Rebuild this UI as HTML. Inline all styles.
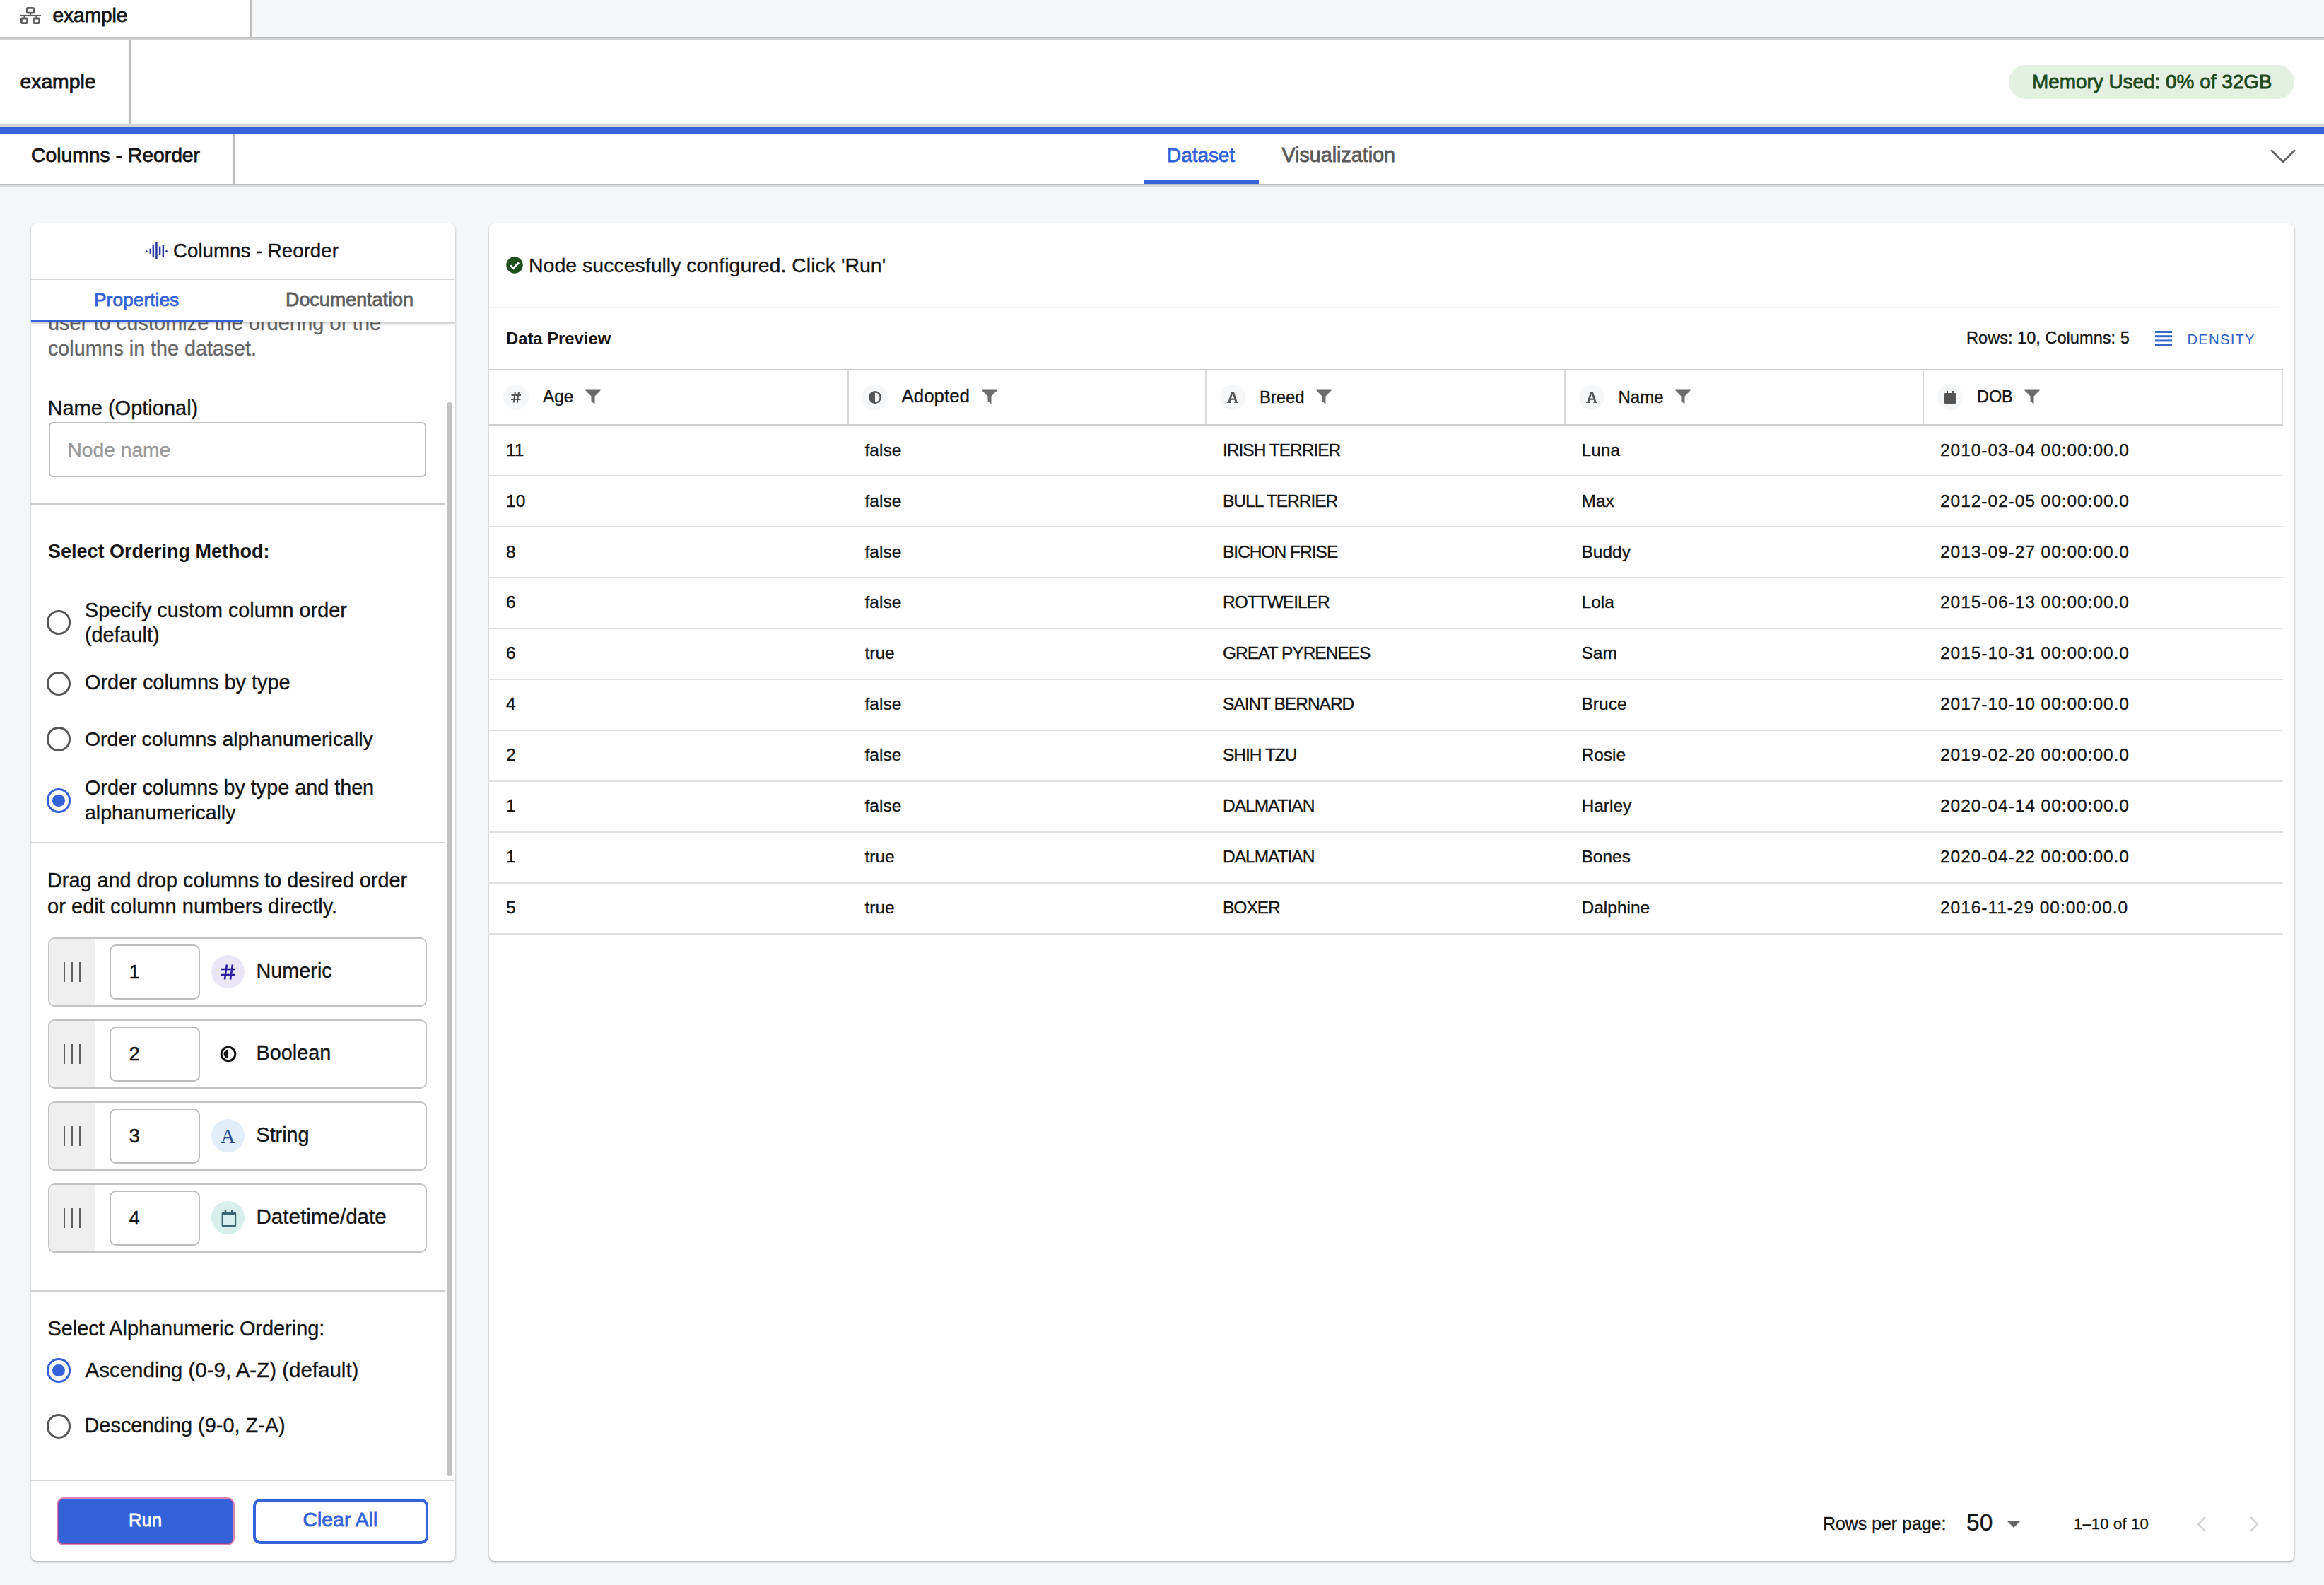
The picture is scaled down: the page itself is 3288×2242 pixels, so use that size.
<!DOCTYPE html>
<html><head><meta charset="utf-8"><title>Columns - Reorder</title>
<style>
html,body{margin:0;padding:0;}
body{width:3288px;height:2242px;position:relative;overflow:hidden;background:#f5f6f8;font-family:"Liberation Sans",sans-serif;color:#1a1a1a;}
.t{position:absolute;white-space:nowrap;line-height:1;}
.r{position:absolute;}
</style></head><body>
<div class="r" style="left:0px;top:0px;width:3288px;height:52px;background:#f5f6f8"></div>
<div class="r" style="left:0px;top:0px;width:354px;height:52px;background:#fff"></div>
<div class="r" style="left:354px;top:0px;width:2px;height:52px;background:#bdbdbd"></div>
<div class="r" style="left:0px;top:52px;width:3288px;height:2px;background:#bdbdbd"></div>
<div class="r" style="left:0px;top:54px;width:3288px;height:2px;background:#d2d2d2"></div>
<svg class="r" style="left:28px;top:10px" width="30" height="24" viewBox="0 0 30 24" fill="none" stroke="#5c5c5c" stroke-width="2.2">
<rect x="10.3" y="1.4" width="9.4" height="6.8" rx="1" stroke-width="2.8"/>
<line x1="15" y1="8" x2="15" y2="12"/>
<line x1="0" y1="12" x2="30" y2="12"/>
<line x1="6.5" y1="12" x2="6.5" y2="15"/>
<line x1="23.5" y1="12" x2="23.5" y2="15"/>
<rect x="2.4" y="16" width="8.2" height="6.6" rx="1" stroke-width="2.8"/>
<rect x="19.4" y="16" width="8.2" height="6.6" rx="1" stroke-width="2.8"/>
</svg>
<div class="t" style="left:74.5px;top:7.6px;font-size:28px;-webkit-text-stroke:0.8px currentColor;color:#141414;">example</div>
<div class="r" style="left:0px;top:56px;width:3288px;height:120px;background:#fff"></div>
<div class="r" style="left:183px;top:56px;width:2px;height:120px;background:#bdbdbd"></div>
<div class="t" style="left:28.5px;top:100.8px;font-size:28.3px;-webkit-text-stroke:0.8px currentColor;color:#141414;">example</div>
<div class="r" style="left:2842px;top:92px;width:404px;height:48px;background:#e3f0e2;border-radius:24px"></div>
<div class="t" style="left:2875px;top:101.7px;font-size:27.9px;-webkit-text-stroke:0.8px currentColor;color:#1d4a1d;">Memory Used: 0% of 32GB</div>
<div class="r" style="left:0px;top:176px;width:3288px;height:4px;background:#d6d6d6"></div>
<div class="r" style="left:0px;top:180px;width:3288px;height:10px;background:#3462d8"></div>
<div class="r" style="left:0px;top:190px;width:3288px;height:70px;background:#fff"></div>
<div class="r" style="left:330px;top:190px;width:2px;height:70px;background:#bdbdbd"></div>
<div class="t" style="left:44px;top:204.8px;font-size:28.3px;-webkit-text-stroke:0.8px currentColor;color:#141414;">Columns - Reorder</div>
<div class="t" style="left:1651px;top:205.5px;font-size:27.9px;-webkit-text-stroke:0.8px currentColor;color:#3462d8;">Dataset</div>
<div class="t" style="left:1813.5px;top:204.8px;font-size:28.7px;-webkit-text-stroke:0.8px currentColor;color:#5a5a5a;">Visualization</div>
<div class="r" style="left:1619px;top:254px;width:162px;height:6px;background:#3462d8"></div>
<svg class="r" style="left:3210px;top:208px" width="40" height="26" viewBox="0 0 40 26" fill="none" stroke="#666" stroke-width="3"><polyline points="4,5 20,21 36,5" stroke-linecap="round"/></svg>
<div class="r" style="left:0px;top:260px;width:3288px;height:2px;background:#bdbdbd"></div>
<div class="r" style="left:0px;top:262px;width:3288px;height:2px;background:#d8d8d8"></div>
<div class="r" style="left:44px;top:316px;width:600px;height:1892px;background:#fff;border-radius:8px;box-shadow:0 2px 3px rgba(0,0,0,0.24),0 0 2px rgba(0,0,0,0.10)"></div>
<svg class="r" style="left:205px;top:342px" width="33" height="26" viewBox="0 0 33 26" fill="#2b3a9e">
<rect x="1" y="12" width="2.6" height="2.6" rx="1.3"/>
<rect x="6.5" y="9.7" width="2.5" height="7"/>
<rect x="10.6" y="4.5" width="2.5" height="17"/>
<rect x="15.2" y="1" width="2.5" height="24"/>
<rect x="19.9" y="6.5" width="2.5" height="12"/>
<rect x="24.6" y="4.5" width="2.5" height="17"/>
<rect x="29.3" y="12" width="2.6" height="2.6" rx="1.3"/>
</svg>
<div class="t" style="left:245px;top:340.7px;font-size:27.7px;-webkit-text-stroke:0.35px currentColor;color:#141414;">Columns - Reorder</div>
<div class="r" style="left:44px;top:394px;width:600px;height:2px;background:#d9d9d9"></div>
<div class="t" style="left:133px;top:411.2px;font-size:26.4px;-webkit-text-stroke:0.8px currentColor;color:#3462d8;">Properties</div>
<div class="t" style="left:404px;top:410.7px;font-size:26.9px;-webkit-text-stroke:0.8px currentColor;color:#5f5f5f;">Documentation</div>
<div class="r" style="left:44px;top:456px;width:600px;height:1638px;overflow:hidden">
<div class="t" style="left:24px;top:-13.0px;font-size:28.7px;-webkit-text-stroke:0.35px currentColor;color:#666;letter-spacing:0.15px;">user to customize the ordering of the</div>
<div class="t" style="left:24px;top:22.5px;font-size:28.7px;-webkit-text-stroke:0.35px currentColor;color:#666;">columns in the dataset.</div>
<div class="t" style="left:23.5px;top:107.3px;font-size:29.0px;-webkit-text-stroke:0.35px currentColor;color:#141414;">Name (Optional)</div>
<div class="r" style="left:25px;top:141px;width:534px;height:78px;box-sizing:border-box;border:2px solid #bdbdbd;border-radius:6px;background:#fff"></div>
<div class="t" style="left:51.5px;top:165.9px;font-size:28.2px;-webkit-text-stroke:0.35px currentColor;color:#999;">Node name</div>
<div class="r" style="left:0px;top:256px;width:585px;height:2px;background:#cfcfcf"></div>
<div class="t" style="left:24px;top:310.9px;font-size:27px;font-weight:700;color:#141414;">Select Ordering Method:</div>
<div class="r" style="left:21.799999999999997px;top:407.4px;width:34.4px;height:34.4px;box-sizing:border-box;border:3.5px solid #575757;border-radius:50%"></div>
<div class="t" style="left:76px;top:392.5px;font-size:28.75px;-webkit-text-stroke:0.35px currentColor;color:#141414;">Specify custom column order</div>
<div class="t" style="left:76px;top:427.5px;font-size:28.75px;-webkit-text-stroke:0.35px currentColor;color:#141414;">(default)</div>
<div class="r" style="left:21.799999999999997px;top:493.5999999999999px;width:34.4px;height:34.4px;box-sizing:border-box;border:3.5px solid #575757;border-radius:50%"></div>
<div class="t" style="left:76px;top:495.3px;font-size:28.9px;-webkit-text-stroke:0.35px currentColor;color:#141414;">Order columns by type</div>
<div class="r" style="left:21.799999999999997px;top:572.3999999999999px;width:34.4px;height:34.4px;box-sizing:border-box;border:3.5px solid #575757;border-radius:50%"></div>
<div class="t" style="left:76px;top:574.7px;font-size:28.45px;-webkit-text-stroke:0.35px currentColor;color:#141414;">Order columns alphanumerically</div>
<div class="r" style="left:21.799999999999997px;top:659.3px;width:34.4px;height:34.4px;box-sizing:border-box;border:3.3px solid #3462d8;border-radius:50%"></div>
<div class="r" style="left:30.299999999999997px;top:667.8px;width:17.4px;height:17.4px;background:#3462d8;border-radius:50%"></div>
<div class="t" style="left:76px;top:643.5px;font-size:28.75px;-webkit-text-stroke:0.35px currentColor;color:#141414;">Order columns by type and then</div>
<div class="t" style="left:76px;top:678.7px;font-size:28.45px;-webkit-text-stroke:0.35px currentColor;color:#141414;">alphanumerically</div>
<div class="r" style="left:0px;top:735px;width:585px;height:2px;background:#cfcfcf"></div>
<div class="t" style="left:23px;top:775.4px;font-size:28.8px;-webkit-text-stroke:0.35px currentColor;color:#141414;">Drag and drop columns to desired order</div>
<div class="t" style="left:23px;top:811.7px;font-size:29.1px;-webkit-text-stroke:0.35px currentColor;color:#141414;">or edit column numbers directly.</div>
<div class="r" style="left:24px;top:870px;width:536px;height:98px;box-sizing:border-box;border:2px solid #c4c4c4;border-radius:9px;background:#fff;overflow:hidden"></div>
<div class="r" style="left:26px;top:872px;width:64px;height:94px;background:#efeff0;border-radius:7px 0 0 7px"></div>
<div class="r" style="left:46px;top:905px;width:2.4px;height:28px;background:#5f5f5f"></div>
<div class="r" style="left:57px;top:905px;width:2.4px;height:28px;background:#5f5f5f"></div>
<div class="r" style="left:68px;top:905px;width:2.4px;height:28px;background:#5f5f5f"></div>
<div class="r" style="left:111px;top:880px;width:128px;height:78px;box-sizing:border-box;border:2px solid #bdbdbd;border-radius:9px;background:#fff"></div>
<div class="t" style="left:138.5px;top:904.5px;font-size:27.5px;-webkit-text-stroke:0.35px currentColor;color:#141414;">1</div>
<div class="r" style="left:255px;top:895px;width:47px;height:47px;background:#ebe6f6;border-radius:50%"></div>
<svg class="r" style="left:266.5px;top:906.5px" width="24" height="24" viewBox="0 0 24 24" fill="none" stroke="#2d1f9e" stroke-width="2.6"><line x1="10" y1="1.5" x2="7" y2="22.5"/><line x1="18" y1="1.5" x2="15" y2="22.5"/><line x1="2" y1="8" x2="22" y2="8"/><line x1="1" y1="16" x2="21" y2="16"/></svg>
<div class="t" style="left:318.5px;top:902.8px;font-size:28.8px;-webkit-text-stroke:0.35px currentColor;color:#141414;">Numeric</div>
<div class="r" style="left:24px;top:986px;width:536px;height:98px;box-sizing:border-box;border:2px solid #c4c4c4;border-radius:9px;background:#fff;overflow:hidden"></div>
<div class="r" style="left:26px;top:988px;width:64px;height:94px;background:#efeff0;border-radius:7px 0 0 7px"></div>
<div class="r" style="left:46px;top:1021px;width:2.4px;height:28px;background:#5f5f5f"></div>
<div class="r" style="left:57px;top:1021px;width:2.4px;height:28px;background:#5f5f5f"></div>
<div class="r" style="left:68px;top:1021px;width:2.4px;height:28px;background:#5f5f5f"></div>
<div class="r" style="left:111px;top:996px;width:128px;height:78px;box-sizing:border-box;border:2px solid #bdbdbd;border-radius:9px;background:#fff"></div>
<div class="t" style="left:138.5px;top:1020.5px;font-size:27.5px;-webkit-text-stroke:0.35px currentColor;color:#141414;">2</div>
<div class="r" style="left:255px;top:1011px;width:47px;height:47px;background:transparent;border-radius:50%"></div>
<svg class="r" style="left:266.5px;top:1022.5px" width="24" height="24" viewBox="0 0 24 24"><circle cx="12" cy="12" r="9.8" fill="none" stroke="#141414" stroke-width="3"/><path d="M12 5.5 A6.5 6.5 0 0 0 12 18.5 Z" fill="#141414"/></svg>
<div class="t" style="left:318.5px;top:1018.8px;font-size:28.8px;-webkit-text-stroke:0.35px currentColor;color:#141414;">Boolean</div>
<div class="r" style="left:24px;top:1102px;width:536px;height:98px;box-sizing:border-box;border:2px solid #c4c4c4;border-radius:9px;background:#fff;overflow:hidden"></div>
<div class="r" style="left:26px;top:1104px;width:64px;height:94px;background:#efeff0;border-radius:7px 0 0 7px"></div>
<div class="r" style="left:46px;top:1137px;width:2.4px;height:28px;background:#5f5f5f"></div>
<div class="r" style="left:57px;top:1137px;width:2.4px;height:28px;background:#5f5f5f"></div>
<div class="r" style="left:68px;top:1137px;width:2.4px;height:28px;background:#5f5f5f"></div>
<div class="r" style="left:111px;top:1112px;width:128px;height:78px;box-sizing:border-box;border:2px solid #bdbdbd;border-radius:9px;background:#fff"></div>
<div class="t" style="left:138.5px;top:1136.5px;font-size:27.5px;-webkit-text-stroke:0.35px currentColor;color:#141414;">3</div>
<div class="r" style="left:255px;top:1127px;width:47px;height:47px;background:#e1edf9;border-radius:50%"></div>
<div class="r" style="left:264.5px;top:1135.5px;width:28px;height:30px;font-family:'Liberation Serif',serif;font-size:29px;line-height:30px;text-align:center;color:#2c4a8c">A</div>
<div class="t" style="left:318.5px;top:1134.9px;font-size:28.7px;-webkit-text-stroke:0.35px currentColor;color:#141414;">String</div>
<div class="r" style="left:24px;top:1218px;width:536px;height:98px;box-sizing:border-box;border:2px solid #c4c4c4;border-radius:9px;background:#fff;overflow:hidden"></div>
<div class="r" style="left:26px;top:1220px;width:64px;height:94px;background:#efeff0;border-radius:7px 0 0 7px"></div>
<div class="r" style="left:46px;top:1253px;width:2.4px;height:28px;background:#5f5f5f"></div>
<div class="r" style="left:57px;top:1253px;width:2.4px;height:28px;background:#5f5f5f"></div>
<div class="r" style="left:68px;top:1253px;width:2.4px;height:28px;background:#5f5f5f"></div>
<div class="r" style="left:111px;top:1228px;width:128px;height:78px;box-sizing:border-box;border:2px solid #bdbdbd;border-radius:9px;background:#fff"></div>
<div class="t" style="left:138.5px;top:1252.5px;font-size:27.5px;-webkit-text-stroke:0.35px currentColor;color:#141414;">4</div>
<div class="r" style="left:255px;top:1243px;width:47px;height:47px;background:#d7f0ec;border-radius:50%"></div>
<svg class="r" style="left:266.5px;top:1254.5px" width="24" height="26" viewBox="0 0 24 26" fill="#3e6572" fill-rule="evenodd"><path d="M4.6 3.4 H21.2 A2 2 0 0 1 23.2 5.4 V22.3 A2 2 0 0 1 21.2 24.3 H4.6 A2 2 0 0 1 2.6 22.3 V5.4 A2 2 0 0 1 4.6 3.4 Z M4.8 7.4 V22.1 H21.0 V7.4 Z"/><rect x="6.7" y="0.6" width="2.6" height="3.4"/><rect x="15.9" y="0.6" width="2.6" height="3.4"/></svg>
<div class="t" style="left:318.5px;top:1250.1px;font-size:29.6px;-webkit-text-stroke:0.35px currentColor;color:#141414;">Datetime/date</div>
<div class="r" style="left:0px;top:1369px;width:585px;height:2px;background:#cfcfcf"></div>
<div class="t" style="left:23.5px;top:1409.3px;font-size:28.9px;-webkit-text-stroke:0.35px currentColor;color:#141414;">Select Alphanumeric Ordering:</div>
<div class="r" style="left:21.799999999999997px;top:1465.3999999999999px;width:34.4px;height:34.4px;box-sizing:border-box;border:3.3px solid #3462d8;border-radius:50%"></div>
<div class="r" style="left:30.299999999999997px;top:1473.8999999999999px;width:17.4px;height:17.4px;background:#3462d8;border-radius:50%"></div>
<div class="t" style="left:76.5px;top:1466.8px;font-size:29.5px;-webkit-text-stroke:0.35px currentColor;color:#141414;">Ascending (0-9, A-Z) (default)</div>
<div class="r" style="left:21.799999999999997px;top:1544.3999999999999px;width:34.4px;height:34.4px;box-sizing:border-box;border:3.5px solid #575757;border-radius:50%"></div>
<div class="t" style="left:75.5px;top:1546.3px;font-size:28.9px;-webkit-text-stroke:0.35px currentColor;color:#141414;">Descending (9-0, Z-A)</div>
<div class="r" style="left:588px;top:113px;width:8px;height:1519px;background:#c2c2c2;border-radius:4px"></div>
</div>
<div class="r" style="left:44px;top:456px;width:600px;height:6px;background:linear-gradient(rgba(0,0,0,0.20),rgba(0,0,0,0.06) 50%,rgba(0,0,0,0))"></div>
<div class="r" style="left:44px;top:452px;width:300px;height:4px;background:#3462d8"></div>
<div class="r" style="left:44px;top:2093px;width:600px;height:2px;background:#d9d9d9"></div>
<div class="r" style="left:82px;top:2120px;width:248px;height:64px;box-sizing:border-box;background:#3462d8;border:1.5px solid #8a3f98;border-radius:8px;box-shadow:0 0 0 2px #d985b6"></div>
<div class="t" style="left:182px;top:2138.2px;font-size:25.7px;-webkit-text-stroke:0.8px currentColor;color:#fff;">Run</div>
<div class="r" style="left:358px;top:2120px;width:248px;height:64px;box-sizing:border-box;background:#fff;border:4px solid #3462d8;border-radius:10px"></div>
<div class="t" style="left:428.5px;top:2135.2px;font-size:28.4px;-webkit-text-stroke:0.8px currentColor;color:#3462d8;">Clear All</div>
<div class="r" style="left:692px;top:316px;width:2554px;height:1892px;background:#fff;border-radius:8px;box-shadow:0 2px 3px rgba(0,0,0,0.24),0 0 2px rgba(0,0,0,0.10)"></div>
<svg class="r" style="left:716px;top:363px" width="24" height="24" viewBox="0 0 24 24"><circle cx="12" cy="12" r="11.8" fill="#1f4f1f"/><polyline points="6,12.5 10.3,16.5 18,8.5" fill="none" stroke="#fff" stroke-width="3"/></svg>
<div class="t" style="left:748px;top:360.9px;font-size:28.5px;-webkit-text-stroke:0.35px currentColor;color:#141414;">Node succesfully configured. Click 'Run'</div>
<div class="r" style="left:696px;top:434px;width:2528px;height:2px;background:#f2f2f2"></div>
<div class="t" style="left:716px;top:466.5px;font-size:23.8px;font-weight:700;color:#141414;">Data Preview</div>
<div class="t" style="left:2782px;top:467.1px;font-size:23.6px;-webkit-text-stroke:0.35px currentColor;color:#141414;">Rows: 10, Columns: 5</div>
<svg class="r" style="left:3049px;top:468px" width="24" height="22" viewBox="0 0 24 22" fill="#3567c8"><rect x="0" y="0" width="24" height="3"/><rect x="0" y="6.2" width="24" height="3"/><rect x="0" y="12.4" width="24" height="3"/><rect x="0" y="18.6" width="24" height="3"/></svg>
<div class="t" style="left:3094.5px;top:470.2px;font-size:20.3px;-webkit-text-stroke:0.35px currentColor;color:#2f63c4;letter-spacing:1.2px;-webkit-text-stroke:0;">DENSITY</div>
<div class="r" style="left:691px;top:522px;width:2539px;height:2px;background:#cfcfcf"></div>
<div class="r" style="left:691px;top:600px;width:2539px;height:2px;background:#cfcfcf"></div>
<div class="r" style="left:1198.5px;top:524px;width:2px;height:76px;background:#d8d8d8"></div>
<div class="r" style="left:1705px;top:524px;width:2px;height:76px;background:#d8d8d8"></div>
<div class="r" style="left:2212.5px;top:524px;width:2px;height:76px;background:#d8d8d8"></div>
<div class="r" style="left:2720px;top:524px;width:2px;height:76px;background:#d8d8d8"></div>
<div class="r" style="left:3228px;top:524px;width:2px;height:76px;background:#d8d8d8"></div>
<div class="r" style="left:712px;top:544px;width:36px;height:36px;background:#f6f7f8;border-radius:50%"></div>
<svg class="r" style="left:722px;top:554px" width="16" height="16" viewBox="0 0 16 16" fill="none" stroke="#555" stroke-width="2"><line x1="6.8" y1="0.5" x2="4.6" y2="15.5"/><line x1="12" y1="0.5" x2="9.8" y2="15.5"/><line x1="1.5" y1="5" x2="15" y2="5"/><line x1="1" y1="11" x2="14.5" y2="11"/></svg>
<div class="t" style="left:768px;top:549.4px;font-size:24.4px;-webkit-text-stroke:0.35px currentColor;color:#141414;">Age</div>
<div class="r" style="left:1219.5px;top:544px;width:36px;height:36px;background:#f6f7f8;border-radius:50%"></div>
<svg class="r" style="left:1228.5px;top:553px" width="18" height="18" viewBox="0 0 18 18"><circle cx="9" cy="9" r="7.8" fill="none" stroke="#555" stroke-width="2.4"/><path d="M9 1.5 A7.5 7.5 0 0 0 9 16.5 Z" fill="#555"/></svg>
<div class="t" style="left:1275.5px;top:548.2px;font-size:25.9px;-webkit-text-stroke:0.35px currentColor;color:#141414;">Adopted</div>
<div class="r" style="left:1726px;top:544px;width:36px;height:36px;background:#f6f7f8;border-radius:50%"></div>
<svg class="r" style="left:1736px;top:554px" width="16" height="16" viewBox="0 0 16 16" fill="#555" fill-rule="evenodd"><path d="M0 16 V14.4 H1.5 L6.1 0.6 H9.9 L14.5 14.4 H16 V16 H10.4 V14.4 H11.5 L10.7 11.8 H5.3 L4.5 14.4 H5.6 V16 Z M5.9 9.6 H10.1 L8 3.2 Z"/></svg>
<div class="t" style="left:1782px;top:550.0px;font-size:23.8px;-webkit-text-stroke:0.35px currentColor;color:#141414;">Breed</div>
<div class="r" style="left:2233.5px;top:544px;width:36px;height:36px;background:#f6f7f8;border-radius:50%"></div>
<svg class="r" style="left:2243.5px;top:554px" width="16" height="16" viewBox="0 0 16 16" fill="#555" fill-rule="evenodd"><path d="M0 16 V14.4 H1.5 L6.1 0.6 H9.9 L14.5 14.4 H16 V16 H10.4 V14.4 H11.5 L10.7 11.8 H5.3 L4.5 14.4 H5.6 V16 Z M5.9 9.6 H10.1 L8 3.2 Z"/></svg>
<div class="t" style="left:2289.5px;top:549.8px;font-size:24.0px;-webkit-text-stroke:0.35px currentColor;color:#141414;">Name</div>
<div class="r" style="left:2741px;top:544px;width:36px;height:36px;background:#f6f7f8;border-radius:50%"></div>
<svg class="r" style="left:2751px;top:553px" width="16" height="18" viewBox="0 0 16 18" fill="#555"><rect x="0" y="3" width="16" height="15" rx="1"/><rect x="3" y="0" width="2" height="4"/><rect x="11" y="0" width="2" height="4"/></svg>
<div class="t" style="left:2797px;top:550.3px;font-size:23.4px;-webkit-text-stroke:0.35px currentColor;color:#141414;">DOB</div>
<svg class="r" style="left:827.9px;top:550px" width="22" height="22" viewBox="0 0 22 22" fill="#6b6b6b"><path d="M0.5 0.5 H21.5 V2.5 L13.5 10.5 V21.5 L8.5 17.5 V10.5 L0.5 2.5 Z"/></svg>
<svg class="r" style="left:1388.5px;top:550px" width="22" height="22" viewBox="0 0 22 22" fill="#6b6b6b"><path d="M0.5 0.5 H21.5 V2.5 L13.5 10.5 V21.5 L8.5 17.5 V10.5 L0.5 2.5 Z"/></svg>
<svg class="r" style="left:1862.0px;top:550px" width="22" height="22" viewBox="0 0 22 22" fill="#6b6b6b"><path d="M0.5 0.5 H21.5 V2.5 L13.5 10.5 V21.5 L8.5 17.5 V10.5 L0.5 2.5 Z"/></svg>
<svg class="r" style="left:2370.0px;top:550px" width="22" height="22" viewBox="0 0 22 22" fill="#6b6b6b"><path d="M0.5 0.5 H21.5 V2.5 L13.5 10.5 V21.5 L8.5 17.5 V10.5 L0.5 2.5 Z"/></svg>
<svg class="r" style="left:2864.2px;top:550px" width="22" height="22" viewBox="0 0 22 22" fill="#6b6b6b"><path d="M0.5 0.5 H21.5 V2.5 L13.5 10.5 V21.5 L8.5 17.5 V10.5 L0.5 2.5 Z"/></svg>
<div class="r" style="left:691px;top:672.0px;width:2539px;height:2px;background:#e0e0e0"></div>
<div class="t" style="left:716px;top:624.6px;font-size:24.5px;-webkit-text-stroke:0.35px currentColor;color:#141414;">11</div>
<div class="t" style="left:1223.5px;top:624.6px;font-size:24.5px;-webkit-text-stroke:0.35px currentColor;color:#141414;">false</div>
<div class="t" style="left:1730px;top:624.6px;font-size:24.5px;-webkit-text-stroke:0.35px currentColor;color:#141414;letter-spacing:-1.0px;">IRISH TERRIER</div>
<div class="t" style="left:2237.5px;top:624.6px;font-size:24.5px;-webkit-text-stroke:0.35px currentColor;color:#141414;">Luna</div>
<div class="t" style="left:2745px;top:624.6px;font-size:24.5px;-webkit-text-stroke:0.35px currentColor;color:#141414;letter-spacing:0.95px;">2010-03-04 00:00:00.0</div>
<div class="r" style="left:691px;top:743.95px;width:2539px;height:2px;background:#e0e0e0"></div>
<div class="t" style="left:716px;top:696.5px;font-size:24.5px;-webkit-text-stroke:0.35px currentColor;color:#141414;">10</div>
<div class="t" style="left:1223.5px;top:696.5px;font-size:24.5px;-webkit-text-stroke:0.35px currentColor;color:#141414;">false</div>
<div class="t" style="left:1730px;top:696.5px;font-size:24.5px;-webkit-text-stroke:0.35px currentColor;color:#141414;letter-spacing:-1.0px;">BULL TERRIER</div>
<div class="t" style="left:2237.5px;top:696.5px;font-size:24.5px;-webkit-text-stroke:0.35px currentColor;color:#141414;">Max</div>
<div class="t" style="left:2745px;top:696.5px;font-size:24.5px;-webkit-text-stroke:0.35px currentColor;color:#141414;letter-spacing:0.95px;">2012-02-05 00:00:00.0</div>
<div class="r" style="left:691px;top:815.9px;width:2539px;height:2px;background:#e0e0e0"></div>
<div class="t" style="left:716px;top:768.5px;font-size:24.5px;-webkit-text-stroke:0.35px currentColor;color:#141414;">8</div>
<div class="t" style="left:1223.5px;top:768.5px;font-size:24.5px;-webkit-text-stroke:0.35px currentColor;color:#141414;">false</div>
<div class="t" style="left:1730px;top:768.5px;font-size:24.5px;-webkit-text-stroke:0.35px currentColor;color:#141414;letter-spacing:-1.0px;">BICHON FRISE</div>
<div class="t" style="left:2237.5px;top:768.5px;font-size:24.5px;-webkit-text-stroke:0.35px currentColor;color:#141414;">Buddy</div>
<div class="t" style="left:2745px;top:768.5px;font-size:24.5px;-webkit-text-stroke:0.35px currentColor;color:#141414;letter-spacing:0.95px;">2013-09-27 00:00:00.0</div>
<div class="r" style="left:691px;top:887.85px;width:2539px;height:2px;background:#e0e0e0"></div>
<div class="t" style="left:716px;top:840.4px;font-size:24.5px;-webkit-text-stroke:0.35px currentColor;color:#141414;">6</div>
<div class="t" style="left:1223.5px;top:840.4px;font-size:24.5px;-webkit-text-stroke:0.35px currentColor;color:#141414;">false</div>
<div class="t" style="left:1730px;top:840.4px;font-size:24.5px;-webkit-text-stroke:0.35px currentColor;color:#141414;letter-spacing:-1.0px;">ROTTWEILER</div>
<div class="t" style="left:2237.5px;top:840.4px;font-size:24.5px;-webkit-text-stroke:0.35px currentColor;color:#141414;">Lola</div>
<div class="t" style="left:2745px;top:840.4px;font-size:24.5px;-webkit-text-stroke:0.35px currentColor;color:#141414;letter-spacing:0.95px;">2015-06-13 00:00:00.0</div>
<div class="r" style="left:691px;top:959.8px;width:2539px;height:2px;background:#e0e0e0"></div>
<div class="t" style="left:716px;top:912.4px;font-size:24.5px;-webkit-text-stroke:0.35px currentColor;color:#141414;">6</div>
<div class="t" style="left:1223.5px;top:912.4px;font-size:24.5px;-webkit-text-stroke:0.35px currentColor;color:#141414;">true</div>
<div class="t" style="left:1730px;top:912.4px;font-size:24.5px;-webkit-text-stroke:0.35px currentColor;color:#141414;letter-spacing:-1.0px;">GREAT PYRENEES</div>
<div class="t" style="left:2237.5px;top:912.4px;font-size:24.5px;-webkit-text-stroke:0.35px currentColor;color:#141414;">Sam</div>
<div class="t" style="left:2745px;top:912.4px;font-size:24.5px;-webkit-text-stroke:0.35px currentColor;color:#141414;letter-spacing:0.95px;">2015-10-31 00:00:00.0</div>
<div class="r" style="left:691px;top:1031.75px;width:2539px;height:2px;background:#e0e0e0"></div>
<div class="t" style="left:716px;top:984.3px;font-size:24.5px;-webkit-text-stroke:0.35px currentColor;color:#141414;">4</div>
<div class="t" style="left:1223.5px;top:984.3px;font-size:24.5px;-webkit-text-stroke:0.35px currentColor;color:#141414;">false</div>
<div class="t" style="left:1730px;top:984.3px;font-size:24.5px;-webkit-text-stroke:0.35px currentColor;color:#141414;letter-spacing:-1.0px;">SAINT BERNARD</div>
<div class="t" style="left:2237.5px;top:984.3px;font-size:24.5px;-webkit-text-stroke:0.35px currentColor;color:#141414;">Bruce</div>
<div class="t" style="left:2745px;top:984.3px;font-size:24.5px;-webkit-text-stroke:0.35px currentColor;color:#141414;letter-spacing:0.95px;">2017-10-10 00:00:00.0</div>
<div class="r" style="left:691px;top:1103.7px;width:2539px;height:2px;background:#e0e0e0"></div>
<div class="t" style="left:716px;top:1056.3px;font-size:24.5px;-webkit-text-stroke:0.35px currentColor;color:#141414;">2</div>
<div class="t" style="left:1223.5px;top:1056.3px;font-size:24.5px;-webkit-text-stroke:0.35px currentColor;color:#141414;">false</div>
<div class="t" style="left:1730px;top:1056.3px;font-size:24.5px;-webkit-text-stroke:0.35px currentColor;color:#141414;letter-spacing:-1.0px;">SHIH TZU</div>
<div class="t" style="left:2237.5px;top:1056.3px;font-size:24.5px;-webkit-text-stroke:0.35px currentColor;color:#141414;">Rosie</div>
<div class="t" style="left:2745px;top:1056.3px;font-size:24.5px;-webkit-text-stroke:0.35px currentColor;color:#141414;letter-spacing:0.95px;">2019-02-20 00:00:00.0</div>
<div class="r" style="left:691px;top:1175.65px;width:2539px;height:2px;background:#e0e0e0"></div>
<div class="t" style="left:716px;top:1128.2px;font-size:24.5px;-webkit-text-stroke:0.35px currentColor;color:#141414;">1</div>
<div class="t" style="left:1223.5px;top:1128.2px;font-size:24.5px;-webkit-text-stroke:0.35px currentColor;color:#141414;">false</div>
<div class="t" style="left:1730px;top:1128.2px;font-size:24.5px;-webkit-text-stroke:0.35px currentColor;color:#141414;letter-spacing:-1.0px;">DALMATIAN</div>
<div class="t" style="left:2237.5px;top:1128.2px;font-size:24.5px;-webkit-text-stroke:0.35px currentColor;color:#141414;">Harley</div>
<div class="t" style="left:2745px;top:1128.2px;font-size:24.5px;-webkit-text-stroke:0.35px currentColor;color:#141414;letter-spacing:0.95px;">2020-04-14 00:00:00.0</div>
<div class="r" style="left:691px;top:1247.6px;width:2539px;height:2px;background:#e0e0e0"></div>
<div class="t" style="left:716px;top:1200.2px;font-size:24.5px;-webkit-text-stroke:0.35px currentColor;color:#141414;">1</div>
<div class="t" style="left:1223.5px;top:1200.2px;font-size:24.5px;-webkit-text-stroke:0.35px currentColor;color:#141414;">true</div>
<div class="t" style="left:1730px;top:1200.2px;font-size:24.5px;-webkit-text-stroke:0.35px currentColor;color:#141414;letter-spacing:-1.0px;">DALMATIAN</div>
<div class="t" style="left:2237.5px;top:1200.2px;font-size:24.5px;-webkit-text-stroke:0.35px currentColor;color:#141414;">Bones</div>
<div class="t" style="left:2745px;top:1200.2px;font-size:24.5px;-webkit-text-stroke:0.35px currentColor;color:#141414;letter-spacing:0.95px;">2020-04-22 00:00:00.0</div>
<div class="r" style="left:691px;top:1319.5500000000002px;width:2539px;height:2px;background:#e0e0e0"></div>
<div class="t" style="left:716px;top:1272.1px;font-size:24.5px;-webkit-text-stroke:0.35px currentColor;color:#141414;">5</div>
<div class="t" style="left:1223.5px;top:1272.1px;font-size:24.5px;-webkit-text-stroke:0.35px currentColor;color:#141414;">true</div>
<div class="t" style="left:1730px;top:1272.1px;font-size:24.5px;-webkit-text-stroke:0.35px currentColor;color:#141414;letter-spacing:-1.0px;">BOXER</div>
<div class="t" style="left:2237.5px;top:1272.1px;font-size:24.5px;-webkit-text-stroke:0.35px currentColor;color:#141414;">Dalphine</div>
<div class="t" style="left:2745px;top:1272.1px;font-size:24.5px;-webkit-text-stroke:0.35px currentColor;color:#141414;letter-spacing:0.95px;">2016-11-29 00:00:00.0</div>
<div class="t" style="left:2579px;top:2143.1px;font-size:24.9px;-webkit-text-stroke:0.35px currentColor;color:#141414;">Rows per page:</div>
<div class="t" style="left:2782px;top:2137.4px;font-size:33.5px;-webkit-text-stroke:0.35px currentColor;color:#141414;">50</div>
<svg class="r" style="left:2840px;top:2152px" width="18" height="9" viewBox="0 0 18 9" fill="#666"><polygon points="0,0 18,0 9,9"/></svg>
<div class="t" style="left:2934px;top:2145.2px;font-size:22px;-webkit-text-stroke:0.35px currentColor;color:#141414;letter-spacing:0.2px;">1–10 of 10</div>
<svg class="r" style="left:3106px;top:2144px" width="18" height="24" viewBox="0 0 18 24" fill="none" stroke="#d6d6d6" stroke-width="2.6"><polyline points="14,2 4,12 14,22"/></svg>
<svg class="r" style="left:3180px;top:2144px" width="18" height="24" viewBox="0 0 18 24" fill="none" stroke="#d6d6d6" stroke-width="2.6"><polyline points="4,2 14,12 4,22"/></svg>
</body></html>
